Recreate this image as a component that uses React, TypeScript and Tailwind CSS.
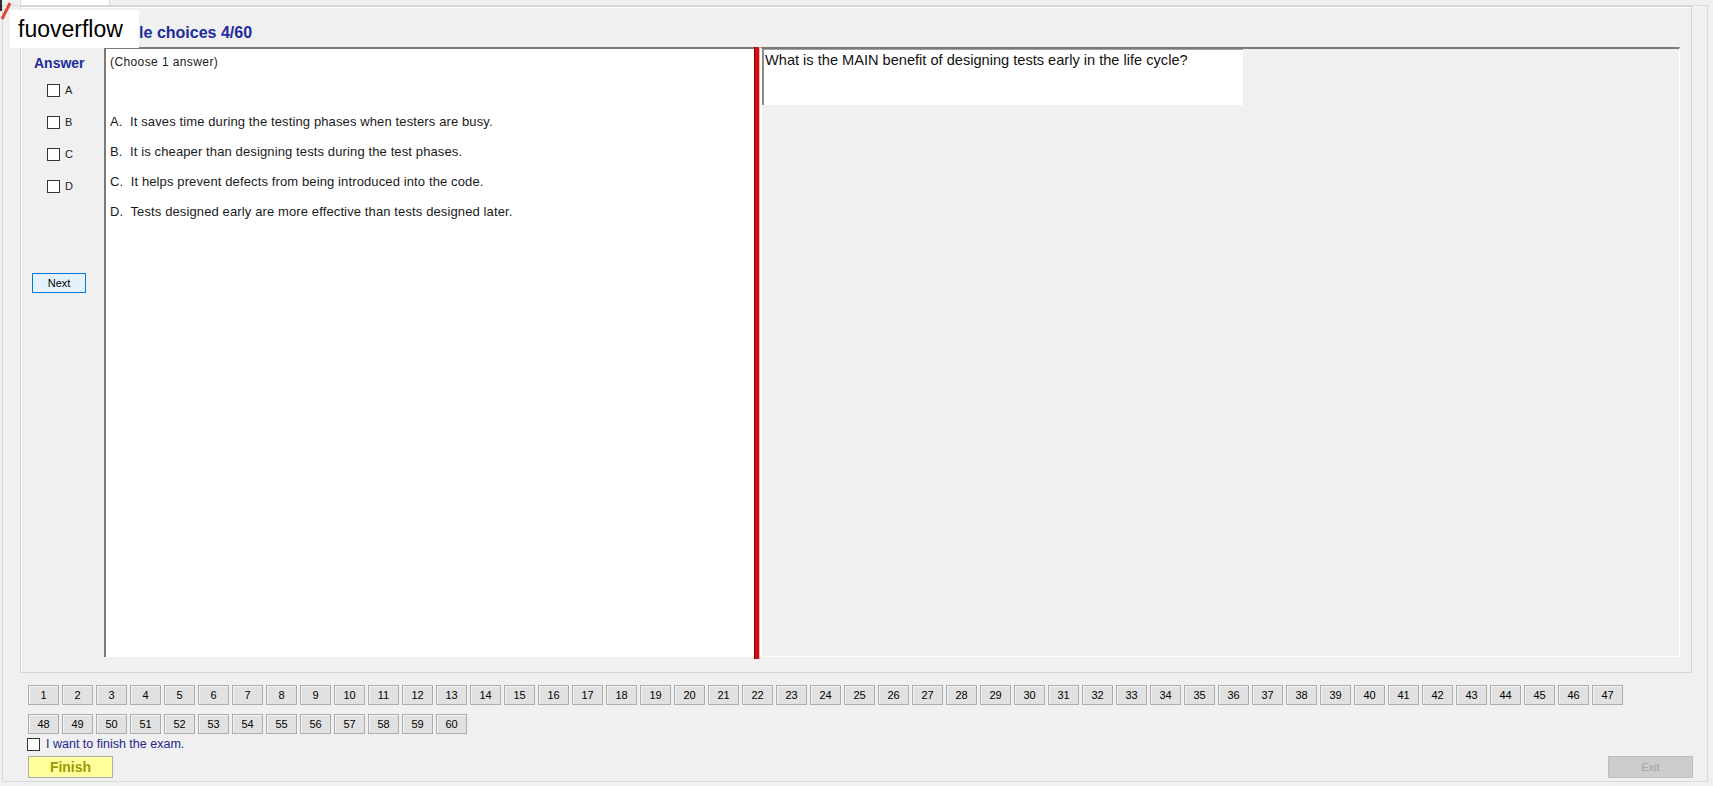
import React from 'react'

const options = [
  { key: 'A', text: 'It saves time during the testing phases when testers are busy.' },
  { key: 'B', text: 'It is cheaper than designing tests during the test phases.' },
  { key: 'C', text: 'It helps prevent defects from being introduced into the code.' },
  { key: 'D', text: 'Tests designed early are more effective than tests designed later.' },
]

const firstRow = Array.from({ length: 47 }, (_, i) => i + 1)
const secondRow = Array.from({ length: 13 }, (_, i) => i + 48)

const Box = () => <span className="block w-[13px] h-[13px] border border-[#333333] bg-white" />

const NumButton = ({ n }: { n: number }) => (
  <button className="w-[31px] h-[20px] bg-[#e1e1e1] border border-[#adadad] shadow-[inset_1px_1px_0_#f4f4f4] text-[11px] text-black leading-none flex items-center justify-center">
    {n}
  </button>
)

export default function App() {
  return (
    <div className="relative w-[1713px] h-[786px] overflow-hidden bg-[#f0f0f0] font-['Liberation_Sans',Arial,sans-serif] text-black">
      {/* tab strip */}
      <div className="h-[5px] flex">
        <div className="ml-[20px] w-[90px] h-[5px] bg-white border-x border-[#d9d9d9]" />
      </div>

      {/* tab page */}
      <div className="ml-[2px] w-[1706px] h-[777px] border border-[#d9d9d9] flex flex-col">
        {/* main group */}
        <div className="ml-[17px] w-[1672px] h-[667px] border border-[#d5d5d5] shadow-[inset_1px_1px_0_#ffffff] flex flex-col">
          <div className="h-[40px] pt-[14px] pl-[71px]">
            <span className="text-[16px] font-bold text-[#1c2c9c] leading-[18px]">Multiple choices 4/60</span>
          </div>

          <div className="flex h-[612px]">
            {/* answer column */}
            <div className="w-[83px] flex flex-col">
              <div className="pt-[8px] pl-[13px] h-[27px] text-[14px] font-bold text-[#1c2c9c] leading-[16px]">Answer</div>
              {options.map(o => (
                <div key={o.key} className="h-[32px] flex items-center pl-[26px] gap-[5px]">
                  <Box />
                  <span className="text-[11px] leading-none text-[#222]">{o.key}</span>
                </div>
              ))}
              <button className="mt-[71px] ml-[11px] w-[54px] h-[20px] bg-[#e5f1fb] border border-[#0078d7] text-[11px] leading-none">
                Next
              </button>
            </div>

            {/* options panel */}
            <div className="w-[650px] h-[610px] bg-white border-l-2 border-t-2 border-[#7a7a7a] pl-[4px] text-[#1a1a1a]">
              <div className="h-[26px] flex items-center text-[12px] tracking-[0.4px]">(Choose 1 answer)</div>
              <div className="h-[32px]" />
              {options.map(o => (
                <div key={o.key} className="h-[30px] flex items-center whitespace-pre text-[13px] tracking-[0.12px]">
                  {o.key}.  {o.text}
                </div>
              ))}
            </div>

            {/* splitter */}
            <div className="w-[6px] h-[612px] bg-[#d10f0f] border-l border-[#8e0000] border-r border-r-[#f2b0b0]" />

            {/* question panel */}
            <div className="w-[920px] h-[610px] border-t-2 border-t-[#7a7a7a] border-l-2 border-l-white border-r border-r-white border-b border-b-white bg-[#f0f0f0]">
              <div className="w-[481px] h-[56px] bg-white border-l-2 border-l-[#8a8a8a] border-t border-t-[#a0a0a0] pl-[1px] pt-[2px] text-[14.6px] leading-[17px] text-[#111]">
                What is the MAIN benefit of designing tests early in the life cycle?
              </div>
            </div>
          </div>
        </div>

        {/* question navigation */}
        <div className="pl-[25px] pt-[12px] flex flex-col gap-[9px]">
          <div className="flex gap-[3px]">
            {firstRow.map(n => <NumButton key={n} n={n} />)}
          </div>
          <div className="flex gap-[3px]">
            {secondRow.map(n => <NumButton key={n} n={n} />)}
          </div>
        </div>

        <div className="h-[16px] mt-[2px] pl-[24px] flex items-center gap-[6px]">
          <Box />
          <span className="text-[12.5px] text-[#25258f] leading-none">I want to finish the exam.</span>
        </div>

        <div className="mt-[4px] pl-[25px] pr-[14px] flex justify-between">
          <button className="w-[85px] h-[22px] bg-[#ffff9c] border border-[#adadad] text-[14px] font-bold text-[#9a9a00] leading-none">
            Finish
          </button>
          <button className="w-[85px] h-[22px] bg-[#cccccc] border border-[#bfbfbf] text-[11px] text-[#a3a3a3] leading-none">
            Exit
          </button>
        </div>
      </div>

      {/* corner mark */}
      <svg className="absolute left-0 top-0" width="14" height="24" viewBox="0 0 14 24">
        <rect x="0" y="0" width="2" height="11" fill="#2a2a2a" />
        <line x1="2" y1="19" x2="10" y2="3" stroke="#e0453a" strokeWidth="3" />
      </svg>

      {/* watermark overlay */}
      <div className="absolute left-[10px] top-[10px] w-[129px] h-[38px] bg-white flex items-center pl-[8px] text-[23px] text-black leading-none">
        fuoverflow
      </div>
    </div>
  )
}
